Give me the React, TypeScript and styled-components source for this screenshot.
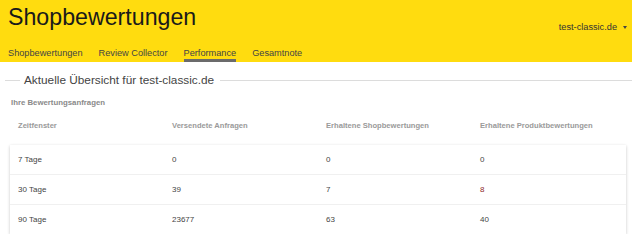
import React from "react";
import styled, { createGlobalStyle } from "styled-components";

const GlobalStyle = createGlobalStyle`
  html, body {
    margin: 0;
    padding: 0;
    background: #ffffff;
    font-family: "Liberation Sans", Arial, sans-serif;
  }
`;

const tabs = ["Shopbewertungen", "Review Collector", "Performance", "Gesamtnote"];

const columns = [
  "Zeitfenster",
  "Versendete Anfragen",
  "Erhaltene Shopbewertungen",
  "Erhaltene Produktbewertungen",
];

const rows: { label: string; values: { value: string; alert?: boolean }[] }[] = [
  { label: "7 Tage", values: [{ value: "0" }, { value: "0" }, { value: "0" }] },
  { label: "30 Tage", values: [{ value: "39" }, { value: "7" }, { value: "8", alert: true }] },
  { label: "90 Tage", values: [{ value: "23677" }, { value: "63" }, { value: "40" }] },
];

export default function App() {
  return (
    <>
      <GlobalStyle />
      <Header>
        <TopRow>
          <Title>Shopbewertungen</Title>
          <ShopSelect>
            test-classic.de
            <Caret />
          </ShopSelect>
        </TopRow>
        <Tabs>
          {tabs.map((tab) => (
            <Tab key={tab} $active={tab === "Performance"}>
              {tab}
            </Tab>
          ))}
        </Tabs>
      </Header>

      <Section>
        <SectionTitle>
          <span>Aktuelle Übersicht für test-classic.de</span>
        </SectionTitle>
        <SubTitle>Ihre Bewertungsanfragen</SubTitle>

        <TableHead>
          {columns.map((col) => (
            <HeadCell key={col}>{col}</HeadCell>
          ))}
        </TableHead>

        <Card>
          {rows.map((row) => (
            <Row key={row.label}>
              <Cell>{row.label}</Cell>
              {row.values.map((v, i) => (
                <Cell key={i} $alert={v.alert}>
                  {v.value}
                </Cell>
              ))}
            </Row>
          ))}
        </Card>
      </Section>
    </>
  );
}

const Header = styled.header`
  background: #ffdc0f;
  padding: 0 5px 0 8px;
`;

const TopRow = styled.div`
  display: flex;
  justify-content: space-between;
  align-items: flex-start;
  height: 48px;
`;

const Title = styled.h1`
  margin: 0;
  padding-top: 5px;
  font-size: 23.2px;
  line-height: 24px;
  font-weight: 400;
  color: #1a1a1a;
`;

const ShopSelect = styled.div`
  display: flex;
  align-items: center;
  padding-top: 22px;
  font-size: 9.2px;
  line-height: 11px;
  color: #333;
`;

const Caret = styled.span`
  margin-left: 6px;
  width: 0;
  height: 0;
  border-left: 2.5px solid transparent;
  border-right: 2.5px solid transparent;
  border-top: 3px solid #444;
`;

const Tabs = styled.nav`
  display: flex;
  gap: 16px;
  height: 14px;
`;

const Tab = styled.span<{ $active?: boolean }>`
  font-size: 9.2px;
  line-height: 11px;
  color: #444;
  border-bottom: 3px solid ${({ $active }) => ($active ? "#6b6b6b" : "transparent")};
`;

const Section = styled.section`
  padding: 11px 6px 0 10px;
`;

const SectionTitle = styled.div`
  display: flex;
  align-items: center;
  margin-left: -5px;
  margin-right: -6px;
  font-size: 11.8px;
  line-height: 14px;
  color: #444;

  &::before,
  &::after {
    content: "";
    height: 1px;
    background: #dcdcdc;
  }

  &::before {
    width: 15px;
    margin-right: 4px;
  }

  &::after {
    flex: 1;
    margin-left: 6px;
  }
`;

const SubTitle = styled.h3`
  margin: 11px 0 0 1px;
  font-size: 7.8px;
  line-height: 10px;
  font-weight: 700;
  color: #8a8a8a;
`;

const TableHead = styled.div`
  display: grid;
  grid-template-columns: repeat(4, 1fr);
  padding: 13px 0 14px;
`;

const HeadCell = styled.div`
  padding-left: 8px;
  font-size: 7.6px;
  line-height: 10px;
  font-weight: 700;
  color: #9a9a9a;
`;

const Card = styled.div`
  background: #fff;
  box-shadow: 0 1px 3px rgba(0, 0, 0, 0.22);
`;

const Row = styled.div`
  display: grid;
  grid-template-columns: repeat(4, 1fr);
  align-items: center;
  height: 29px;
  border-top: 1px solid #f0f0f0;

  &:first-child {
    border-top: none;
  }
`;

const Cell = styled.div<{ $alert?: boolean }>`
  padding-left: 8px;
  font-size: 8px;
  line-height: 10px;
  color: ${({ $alert }) => ($alert ? "#8e2b2b" : "#444")};
`;
